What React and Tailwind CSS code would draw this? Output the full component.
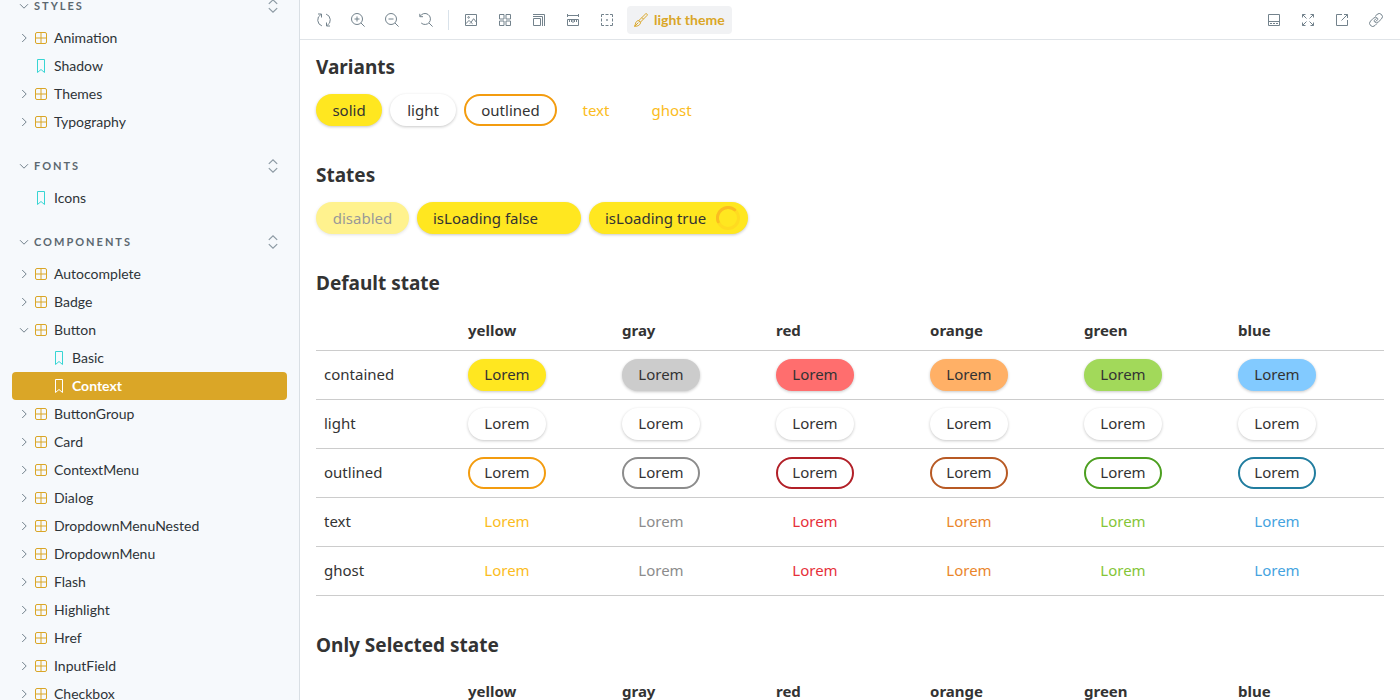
import React from "react";

const icons = {
  sync: (
    <>
      <path d="M4.9 12.9A6.3 6.3 0 0 1 3.9 1.5" />
      <path d="M1 1h3.5v3.5" />
      <path d="M9.1 1.1a6.3 6.3 0 0 1 1 11.4" />
      <path d="M13 13H9.5V9.5" />
    </>
  ),
  zoomIn: (
    <>
      <circle cx="6" cy="6" r="5.5" />
      <path d="M10 10l3.6 3.6M6 3.5v5M3.5 6h5" />
    </>
  ),
  zoomOut: (
    <>
      <circle cx="6" cy="6" r="5.5" />
      <path d="M10 10l3.6 3.6M3.5 6h5" />
    </>
  ),
  zoomReset: (
    <>
      <path d="M1.2 3.2A5.5 5.5 0 1 1 2.2 10" />
      <path d="M.8.8v2.9h3.2M10 10l3.6 3.6" />
    </>
  ),
  photo: (
    <>
      <path d="M1.5 1.5h11v11h-11z" />
      <circle cx="4.6" cy="4.4" r=".8" />
      <path d="M1.8 10.8 5 7.4l2 2 2.6-3.7 2.9 3.7M5.8 10.6 7 9.4l1.6 1.4" />
    </>
  ),
  grid: <path d="M1.5 1.5H6V6H1.5zM8 1.5h4.5V6H8zM1.5 8H6v4.5H1.5zM8 8h4.5v4.5H8z" />,
  grow: <path d="M1.5 5.5h7v7h-7zM1 3.5h9.5V13M1 1.5h11.5V13" />,
  measure: (
    <path d="M1.5 1v3M12.5 1v3M1.5 2.5h11M1.5 6.5h11v6h-11zM3.5 7v2M5.5 7v2M7 7v3M8.5 7v2M10.5 7v2" />
  ),
  outline: (
    <path d="M1.5 4V1.5H4M5.5 1.5h3M10 1.5h2.5V4M12.5 5.5v3M12.5 10v2.5H10M8.5 12.5h-3M4 12.5H1.5V10M1.5 8.5v-3M6.2 7h1.6M7 6.2v1.6" />
  ),
  brush: (
    <>
      <path d="M4.8 7.6 11.6.9c.9-.8 2.3.6 1.5 1.5L6.4 9.2z" />
      <path d="M4.8 7.6 6.4 9.2c.5 2.4-2.6 4.2-5.9 4.2.9-.9.6-2.6 1.4-4 .6-1.1 1.7-1.9 2.9-1.8zM4.4 9.6.8 13.2M8 4.6l1.5 1.5" />
    </>
  ),
  bottomBar: <path d="M1.5 1.5h11v11h-11zM2 8.5h10M3 10.5h2M6 10.5h2M9 10.5h2" />,
  expand: (
    <path d="M1.5 4.5v-3h3M9.5 1.5h3v3M12.5 9.5v3h-3M4.5 12.5h-3v-3M1.5 1.5 5.5 5.5M12.5 1.5l-4 4M12.5 12.5l-4-4M1.5 12.5l4-4" />
  ),
  share: <path d="M7 1.5H1.5v11h11V7M9 1.5h3.5V5M12.5 1.5 6.5 7.5" />,
  link: (
    <>
      <path d="M6.1 3.4 8 1.5a3.1 3.1 0 0 1 4.5 4.4L9.7 8.7a3 3 0 0 1-4.3 0c-.4-.4-.4-1 0-1.4L7.3 5.4" />
      <path d="M7.9 10.6 6 12.5a3.1 3.1 0 0 1-4.5-4.4l2.8-2.8a3 3 0 0 1 4.3 0c.4.4.4 1 0 1.4L6.7 8.6" />
    </>
  ),
  component: (
    <>
      <rect x="1.5" y="1.5" width="11" height="11" rx="1.5" />
      <path d="M7 2v10M2 7h10" />
    </>
  ),
  bookmark: <path d="M3.5.5h7v13L7 10.5l-3.5 3z" strokeLinejoin="round" />,
  expandAll: <path d="M2.8 4.9 7 .9l4.2 4M2.8 9.1l4.2 4 4.2-4" strokeWidth="1.2" />,
};

function Icon({ name, className = "" }) {
  return (
    <svg
      viewBox="0 0 14 14"
      fill="none"
      stroke="currentColor"
      strokeWidth="1"
      aria-hidden="true"
      className={`size-3.5 shrink-0 ${className}`}
    >
      {icons[name]}
    </svg>
  );
}

function Chevron({ open }) {
  return (
    <svg
      viewBox="0 0 8 8"
      fill="none"
      stroke="currentColor"
      strokeWidth="1"
      aria-hidden="true"
      className="size-2 shrink-0 overflow-visible text-[#73828c]"
    >
      <path d={open ? "M0 2.2 4 6.2 8 2.2" : "M2.2 0 6.2 4 2.2 8"} />
    </svg>
  );
}

const sections = [
  {
    title: "STYLES",
    items: [
      { label: "Animation" },
      { label: "Shadow", leaf: true },
      { label: "Themes" },
      { label: "Typography" },
    ],
  },
  { title: "FONTS", items: [{ label: "Icons", leaf: true }] },
  {
    title: "COMPONENTS",
    items: [
      { label: "Autocomplete" },
      { label: "Badge" },
      { label: "Button", open: true },
      { label: "Basic", leaf: true, nested: true },
      { label: "Context", leaf: true, nested: true, selected: true },
      { label: "ButtonGroup" },
      { label: "Card" },
      { label: "ContextMenu" },
      { label: "Dialog" },
      { label: "DropdownMenuNested" },
      { label: "DropdownMenu" },
      { label: "Flash" },
      { label: "Highlight" },
      { label: "Href" },
      { label: "InputField" },
      { label: "Checkbox" },
    ],
  },
];

function TreeItem({ label, leaf, nested, open, selected }) {
  const row = `flex h-7 w-full items-center gap-1.5 rounded pr-2 text-left ${nested ? "pl-[26px]" : "pl-2"}`;
  if (leaf) {
    return (
      <a
        href={`#${label.toLowerCase()}`}
        aria-current={selected ? "page" : undefined}
        className={`${row} ${selected ? "bg-[#daa627] font-bold text-white" : ""}`}
      >
        <span className="w-2 shrink-0" />
        <Icon name="bookmark" className={selected ? "text-white" : "text-[#37d5d3]"} />
        {label}
      </a>
    );
  }
  return (
    <button type="button" aria-expanded={Boolean(open)} className={row}>
      <Chevron open={open} />
      <Icon name="component" className="text-[#daa627]" />
      {label}
    </button>
  );
}

function Sidebar() {
  return (
    <nav className="w-[300px] shrink-0 overflow-hidden border-r border-[#d9dfe4] bg-[#f6f9fc] px-3 font-['Lato',sans-serif] text-sm text-[#2e3438]">
      <div className="-mt-2 flex flex-col gap-4">
        {sections.map((section) => (
          <section key={section.title} className="flex flex-col">
            <div className="mb-1 flex h-7 items-center justify-between pr-[7px] pl-2">
              <button
                type="button"
                aria-expanded="true"
                className="flex items-center gap-1.5 text-[11px] font-bold tracking-[2px] text-[#5c6870]"
              >
                <Chevron open />
                {section.title}
              </button>
              <button type="button" aria-label={`Expand ${section.title}`} className="text-[#8c99a3]">
                <Icon name="expandAll" />
              </button>
            </div>
            {section.items.map((item) => (
              <TreeItem key={item.label} {...item} />
            ))}
          </section>
        ))}
      </div>
    </nav>
  );
}

function ToolButton({ icon, label }) {
  return (
    <button type="button" aria-label={label} className="flex size-7 items-center justify-center rounded">
      <Icon name={icon} />
    </button>
  );
}

function Toolbar() {
  return (
    <header className="flex h-10 shrink-0 items-center justify-between border-b border-[#e0e4e8] px-2.5 text-[#73828c]">
      <div className="flex items-center gap-1.5">
        <ToolButton icon="sync" label="Remount component" />
        <ToolButton icon="zoomIn" label="Zoom in" />
        <ToolButton icon="zoomOut" label="Zoom out" />
        <ToolButton icon="zoomReset" label="Reset zoom" />
        <span className="mx-0.5 h-5 w-px bg-[#d9e2ea]" />
        <ToolButton icon="photo" label="Change background" />
        <ToolButton icon="grid" label="Apply grid" />
        <ToolButton icon="grow" label="Change viewport size" />
        <ToolButton icon="measure" label="Enable measure" />
        <ToolButton icon="outline" label="Apply outlines" />
        <button
          type="button"
          className="flex h-7 items-center gap-1.5 rounded bg-[#f1f2f4] px-[7px] font-['Lato',sans-serif] text-sm font-bold text-[#daa627]"
        >
          <Icon name="brush" />
          light theme
        </button>
      </div>
      <div className="flex items-center gap-1.5">
        <ToolButton icon="bottomBar" label="Show addons" />
        <ToolButton icon="expand" label="Go full screen" />
        <ToolButton icon="share" label="Open in new tab" />
        <ToolButton icon="link" label="Copy link" />
      </div>
    </header>
  );
}

const shadow = "shadow-[0_1px_3px_rgba(0,0,0,0.22)]";

function Pill({ className = "", children, ...rest }) {
  return (
    <button
      type="button"
      className={`inline-flex h-8 items-center rounded-full whitespace-nowrap ${className}`}
      {...rest}
    >
      {children}
    </button>
  );
}

const colors = [
  { name: "yellow", solid: "bg-[#ffe720]", border: "border-[#f39c0f]", text: "text-[#fbbc21]" },
  { name: "gray", solid: "bg-[#cccccc]", border: "border-[#8c8c8c]", text: "text-[#8c8c8c]" },
  { name: "red", solid: "bg-[#ff6e6e]", border: "border-[#b22028]", text: "text-[#e6303a]" },
  { name: "orange", solid: "bg-[#ffb066]", border: "border-[#b85a24]", text: "text-[#ea862c]" },
  { name: "green", solid: "bg-[#a2d95a]", border: "border-[#4c9f20]", text: "text-[#84c537]" },
  { name: "blue", solid: "bg-[#82caff]", border: "border-[#217d9f]", text: "text-[#45a3e0]" },
];

const variants = ["contained", "light", "outlined", "text", "ghost"];

function variantClass(variant, color) {
  if (variant === "contained") return `${color.solid} ${shadow}`;
  if (variant === "light") return `bg-white ${shadow}`;
  if (variant === "outlined") return `border-2 ${color.border}`;
  return color.text;
}

function Block({ title, children }) {
  return (
    <section className="flex flex-col gap-3">
      <h2 className="text-[19px] leading-[30px] font-bold">{title}</h2>
      {children}
    </section>
  );
}

function ColorTable() {
  return (
    <table className="w-full table-fixed border-collapse text-left">
      <thead>
        <tr className="h-10 border-b border-[#cccccc]">
          <td className="w-36" />
          {colors.map((color) => (
            <th key={color.name} scope="col" className="px-2 font-bold">
              {color.name}
            </th>
          ))}
        </tr>
      </thead>
      <tbody>
        {variants.map((variant) => (
          <tr key={variant} className="h-[49px] border-b border-[#cccccc]">
            <th scope="row" className="px-2 font-normal">
              {variant}
            </th>
            {colors.map((color) => (
              <td key={color.name} className="px-2">
                <Pill className={`w-[78px] justify-center align-middle ${variantClass(variant, color)}`}>
                  Lorem
                </Pill>
              </td>
            ))}
          </tr>
        ))}
      </tbody>
    </table>
  );
}

function Spinner() {
  return (
    <svg viewBox="0 0 24 24" fill="none" strokeWidth="3" aria-hidden="true" className="size-6 shrink-0">
      <circle cx="12" cy="12" r="10.5" stroke="#ffdb20" />
      <path d="M2.2 15.8A10.5 10.5 0 0 1 18.7 3.9" stroke="#fbbc21" strokeLinecap="round" />
    </svg>
  );
}

export default function App() {
  const yellow = colors[0];
  const solid = variantClass("contained", yellow);
  return (
    <div className="flex h-screen overflow-hidden bg-white">
      <Sidebar />
      <div className="flex min-w-0 flex-1 flex-col">
        <Toolbar />
        <main className="flex min-h-0 flex-1 flex-col gap-[34px] overflow-hidden px-4 pt-3 font-['Noto_Sans',sans-serif] text-[15px] text-[#333333]">
          <Block title="Variants">
            <div className="flex gap-2">
              <Pill className={`min-w-[66px] justify-center px-4 ${solid}`}>solid</Pill>
              <Pill className={`min-w-[66px] justify-center px-4 ${variantClass("light", yellow)}`}>light</Pill>
              <Pill className={`min-w-[93px] justify-center px-3.5 ${variantClass("outlined", yellow)}`}>
                outlined
              </Pill>
              <Pill className={`min-w-[62px] justify-center px-4 ${variantClass("text", yellow)}`}>text</Pill>
              <Pill className={`min-w-[73px] justify-center px-4 ${variantClass("ghost", yellow)}`}>ghost</Pill>
            </div>
          </Block>
          <Block title="States">
            <div className="flex gap-2">
              <Pill disabled className={`min-w-[93px] justify-center px-4 opacity-50 ${solid}`}>
                disabled
              </Pill>
              <Pill className={`min-w-[164px] justify-between gap-2 pr-2 pl-4 ${solid}`}>
                isLoading false
                <span className="size-6" />
              </Pill>
              <Pill aria-busy="true" className={`min-w-[159px] justify-between gap-2 pr-2 pl-4 ${solid}`}>
                isLoading true
                <Spinner />
              </Pill>
            </div>
          </Block>
          <Block title="Default state">
            <ColorTable />
          </Block>
          <Block title="Only Selected state">
            <ColorTable />
          </Block>
        </main>
      </div>
    </div>
  );
}
